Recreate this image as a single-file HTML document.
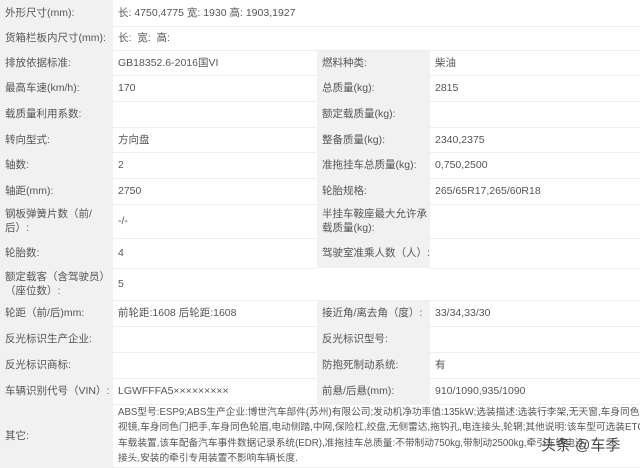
<!DOCTYPE html>
<html><head><meta charset="utf-8"><style>
body{margin:0;width:640px;height:466px;overflow:hidden;background:#f1f1f1;font-family:"Liberation Sans","Noto Sans CJK SC",sans-serif;font-size:10.5px;color:#555;}
table{border-collapse:collapse;width:640px;table-layout:fixed}
td{padding:0 0 0 5px;vertical-align:middle;line-height:14px}
td.l{background:#f1f1f1;width:108px}
td.v{background:#fff;border-bottom:1px solid #eee}
.wm{position:absolute;left:541px;top:434px;font-size:15px;color:#444;}
</style></head><body>
<table>
<col style="width:113px"><col style="width:204px"><col style="width:113px"><col style="width:210px">
<tr style="height:26px"><td class="l">外形尺寸(mm):</td><td class="v" colspan="3">长: 4750,4775 宽: 1930 高: 1903,1927</td></tr>
<tr style="height:24px"><td class="l">货箱栏板内尺寸(mm):</td><td class="v" colspan="3">长: &nbsp;宽: &nbsp;高:</td></tr>
<tr style="height:25px"><td class="l">排放依据标准:</td><td class="v">GB18352.6-2016国VI</td><td class="l">燃料种类:</td><td class="v">柴油</td></tr>
<tr style="height:26px"><td class="l">最高车速(km/h):</td><td class="v">170</td><td class="l">总质量(kg):</td><td class="v">2815</td></tr>
<tr style="height:26px"><td class="l">载质量利用系数:</td><td class="v"></td><td class="l">额定载质量(kg):</td><td class="v"></td></tr>
<tr style="height:25px"><td class="l">转向型式:</td><td class="v">方向盘</td><td class="l">整备质量(kg):</td><td class="v">2340,2375</td></tr>
<tr style="height:26px"><td class="l">轴数:</td><td class="v">2</td><td class="l">准拖挂车总质量(kg):</td><td class="v">0,750,2500</td></tr>
<tr style="height:26px"><td class="l">轴距(mm):</td><td class="v">2750</td><td class="l">轮胎规格:</td><td class="v">265/65R17,265/60R18</td></tr>
<tr style="height:34px"><td class="l">钢板弹簧片数（前/后）:</td><td class="v">-/-</td><td class="l">半挂车鞍座最大允许承载质量(kg):</td><td class="v"></td></tr>
<tr style="height:30px"><td class="l">轮胎数:</td><td class="v">4</td><td class="l">驾驶室准乘人数（人）:</td><td class="v"></td></tr>
<tr style="height:32px"><td class="l">额定载客（含驾驶员）（座位数）:</td><td class="v" colspan="3">5</td></tr>
<tr style="height:26px"><td class="l">轮距（前/后)mm:</td><td class="v">前轮距:1608 后轮距:1608</td><td class="l">接近角/离去角（度）:</td><td class="v">33/34,33/30</td></tr>
<tr style="height:26px"><td class="l">反光标识生产企业:</td><td class="v"></td><td class="l">反光标识型号:</td><td class="v"></td></tr>
<tr style="height:26px"><td class="l">反光标识商标:</td><td class="v"></td><td class="l">防抱死制动系统:</td><td class="v">有</td></tr>
<tr style="height:26px"><td class="l">车辆识别代号（VIN）:</td><td class="v">LGWFFFA5×××××××××</td><td class="l">前悬/后悬(mm):</td><td class="v">910/1090,935/1090</td></tr>
<tr style="height:62px"><td class="l">其它:</td><td class="v" colspan="3" style="line-height:15.5px;font-size:9.7px;white-space:nowrap;overflow:hidden">ABS型号:ESP9;ABS生产企业:博世汽车部件(苏州)有限公司;发动机净功率值:135kW;选装描述:选装行李架,无天窗,车身同色后<br>视镜,车身同色门把手,车身同色轮眉,电动侧踏,中网,保险杠,绞盘,无侧雷达,拖钩孔,电连接头,轮辋;其他说明:该车型可选装ETC<br>车载装置,该车配备汽车事件数据记录系统(EDR),准拖挂车总质量:不带制动750kg,带制动2500kg,牵引车辆电连<br>接头,安装的牵引专用装置不影响车辆长度.</td></tr>
</table>
<div class="wm">头条 @车季</div>
</body></html>
